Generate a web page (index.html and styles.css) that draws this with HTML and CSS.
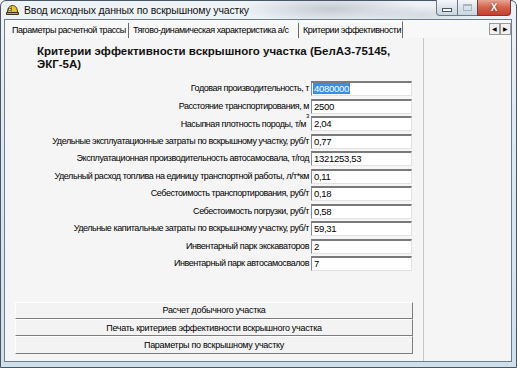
FILE: index.html
```html
<!DOCTYPE html>
<html>
<head>
  <meta charset="UTF-8">
  <title>Ввод исходных данных по вскрышному участку</title>
  <link rel="stylesheet" href="styles.css">
</head>
<body>
  <div class="window">
    <div class="titlebar">
      <svg class="app-icon" width="13" height="12" viewBox="0 0 13 12">
        <path d="M1.5 8.5 C1.5 4 3.5 1.5 6.5 1.5 C9.5 1.5 11.5 4 11.5 8.5 Z" fill="#f2c318" stroke="#3b3320" stroke-width="1"/>
        <path d="M0.5 8.5 H12.5 V10.5 H0.5 Z" fill="#e0a810" stroke="#3b3320" stroke-width="1"/>
        <path d="M5.5 2 V8" stroke="#b78a0c" stroke-width="1"/>
        <rect x="2.5" y="4.5" width="2.5" height="2" fill="#fff6c0" stroke="#3b3320" stroke-width="0.6"/>
      </svg>
      <span class="title">Ввод исходных данных по вскрышному участку</span>
      <div class="caption-buttons">
        <div class="cap cap-min"><span class="glyph-min"></span></div>
        <div class="cap cap-max"><span class="glyph-max"></span></div>
        <div class="cap cap-close">X</div>
      </div>
    </div>

    <div class="client">
      <div class="tabstrip">
        <div class="tab tab-route">Параметры расчетной трассы</div>
        <div class="tab tab-dynamics">Тягово-динамическая характеристика а/с</div>
        <div class="tab tab-criteria active">Критерии эффективности</div>
        <div class="tab-scroll">
          <div class="arrow">&#9664;</div>
          <div class="arrow">&#9654;</div>
        </div>
      </div>

      <div class="page">
        <div class="main">
          <h1 class="heading">Критерии эффективности вскрышного участка (БелАЗ-75145, ЭКГ-5А)</h1>

          <div class="form">
            <div class="row"><label>Годовая производительность, т</label><div class="field"><span class="selected">4080000</span></div></div>
            <div class="row"><label>Расстояние транспортирования, м</label><div class="field">2500</div></div>
            <div class="row"><label>Насыпная плотность породы, т/м<sup>3</sup></label><div class="field">2,04</div></div>
            <div class="row"><label>Удельные эксплуатационные затраты по вскрышному участку, руб/т</label><div class="field">0,77</div></div>
            <div class="row"><label>Эксплуатационная производительность автосамосвала, т/год</label><div class="field">1321253,53</div></div>
            <div class="row"><label>Удельный расход топлива на единицу транспортной работы, л/т*км</label><div class="field">0,11</div></div>
            <div class="row"><label>Себестоимость транспортирования, руб/т</label><div class="field">0,18</div></div>
            <div class="row"><label>Себестоимость погрузки, руб/т</label><div class="field">0,58</div></div>
            <div class="row"><label>Удельные капитальные затраты по вскрышному участку, руб/т</label><div class="field">59,31</div></div>
            <div class="row"><label>Инвентарный парк экскаваторов</label><div class="field">2</div></div>
            <div class="row"><label>Инвентарный парк автосамосвалов</label><div class="field">7</div></div>
          </div>

          <div class="actions">
            <button>Расчет добычного участка</button>
            <button>Печать критериев эффективности вскрышного участка</button>
            <button>Параметры по вскрышному участку</button>
          </div>
        </div>
        <div class="side"></div>
      </div>
    </div>
  </div>
</body>
</html>
```

FILE: styles.css
```css
body {
  margin: 0;
  width: 517px;
  height: 368px;
  overflow: hidden;
  background: #ffffff;
  font-family: "Liberation Sans", Arial, sans-serif;
}
.window {
  box-sizing: border-box;
  width: 517px;
  height: 368px;
  border: 1px solid #4a5664;
  border-radius: 6px 6px 0 0;
  background:
    radial-gradient(ellipse 90px 14px at 330px 8px, rgba(120,130,140,0.35), rgba(120,130,140,0)),
    radial-gradient(ellipse 60px 10px at 420px 14px, rgba(140,150,160,0.25), rgba(140,150,160,0)),
    linear-gradient(to bottom, #eef3f7, #dde7ef 40%, #cfe0ea);
  display: flex;
  flex-direction: column;
  padding: 0 4px 5px 3px;
}
.titlebar {
  height: 18px;
  display: flex;
  align-items: center;
  position: relative;
}
.app-icon {
  margin: 0 5px 0 2px;
}
.title {
  font-size: 10.5px;
  color: #111;
  letter-spacing: -0.15px;
}
.caption-buttons {
  position: absolute;
  right: 1px;
  top: -1px;
  display: flex;
}
.cap {
  height: 16px;
  box-sizing: border-box;
  border: 1px solid #6d7a88;
  border-top: none;
  display: flex;
  align-items: center;
  justify-content: center;
  background: linear-gradient(to bottom, #f4f7fa, #dbe3ea 50%, #cbd6df);
}
.cap-min {
  width: 21px;
  border-radius: 0 0 0 4px;
  border-right: none;
}
.cap-max {
  width: 20px;
  border-right: none;
}
.cap-close {
  width: 34px;
  border-radius: 0 0 4px 0;
  border-color: #7a3a34;
  background: linear-gradient(to bottom, #e8a593, #d5614b 50%, #c3402c);
  color: #fff;
  font-size: 10px;
  font-weight: bold;
  text-shadow: 0 0 2px #5a1a10;
}
.glyph-min {
  width: 8px;
  height: 2px;
  background: #fff;
  border: 1px solid #4b5866;
  margin-top: 5px;
}
.glyph-max {
  width: 7px;
  height: 5px;
  border: 1px solid #a9b4bf;
  box-shadow: inset 0 1px #a9b4bf;
}
.client {
  flex: 1;
  display: flex;
  flex-direction: column;
  border: 1px solid #6e7e8e;
  background: #f5f5f5;
}
.tabstrip {
  height: 18px;
  display: flex;
  align-items: flex-end;
  background: #f8f8f8;
  position: relative;
  font-size: 9px;
  letter-spacing: -0.45px;
}
.tab {
  box-sizing: border-box;
  height: 15px;
  line-height: 14px;
  padding: 0 0 0 3px;
  border-right: 1px solid #6a6a6a;
  color: #000;
  white-space: nowrap;
  overflow: hidden;
}
.tab-route {
  width: 121px;
  margin-left: 3px;
  padding-left: 4px;
}
.tab-dynamics {
  width: 170px;
  padding-left: 4px;
}
.tab-criteria {
  width: 104px;
}
.tab.active {
  height: 17px;
  line-height: 17px;
  padding-left: 4px;
  border-top: 1px solid #ffffff;
  background: #f8f8f8;
}
.tab-scroll {
  position: absolute;
  right: 0;
  top: 3px;
  display: flex;
}
.arrow {
  width: 11px;
  height: 12px;
  box-sizing: border-box;
  border: 1px solid #9a9a9a;
  background: #f0f0f0;
  font-size: 6px;
  line-height: 10px;
  text-align: center;
  letter-spacing: 0;
  color: #000;
}
.page {
  flex: 1;
  display: flex;
  background: #f5f5f5;
}
.main {
  width: 418px;
  border-right: 1px solid #c6c6c6;
}
.side {
  flex: 1;
}
.heading {
  margin: 7px 0 0 32px;
  width: 375px;
  font-size: 11.5px;
  line-height: 13px;
  font-weight: bold;
  color: #111;
}
.form {
  width: 407px;
  margin-top: 10px;
  display: flex;
  flex-direction: column;
}
.row {
  height: 17.5px;
  display: flex;
  justify-content: flex-end;
  align-items: flex-start;
}
.row label {
  font-size: 9px;
  letter-spacing: -0.45px;
  line-height: 15px;
  margin-right: 2px;
  color: #000;
}
.row label sup {
  font-size: 6px;
  vertical-align: 9px;
  line-height: 0;
}
.field {
  box-sizing: border-box;
  width: 101px;
  height: 15px;
  background: #ffffff;
  border-top: 2px solid #7a7a7a;
  border-left: 1px solid #8a8a8a;
  border-right: 1px solid #e2e2e2;
  border-bottom: 1px solid #e2e2e2;
  font-size: 9.5px;
  letter-spacing: -0.3px;
  line-height: 12px;
  padding-left: 2px;
  color: #000;
}
.selected {
  background: #3a8ee6;
  color: #fff;
  padding: 0 1px;
  margin-left: -1px;
}
.actions {
  margin: 28px 0 0 10px;
  width: 398px;
  display: flex;
  flex-direction: column;
}
.actions button {
  box-sizing: border-box;
  height: 17.4px;
  padding: 0;
  background: #f3f3f3;
  border: 1px solid;
  border-color: #ffffff #7d7d7d #7d7d7d #ffffff;
  font-family: "Liberation Sans", Arial, sans-serif;
  font-size: 9px;
  letter-spacing: -0.3px;
  color: #000;
}
```
